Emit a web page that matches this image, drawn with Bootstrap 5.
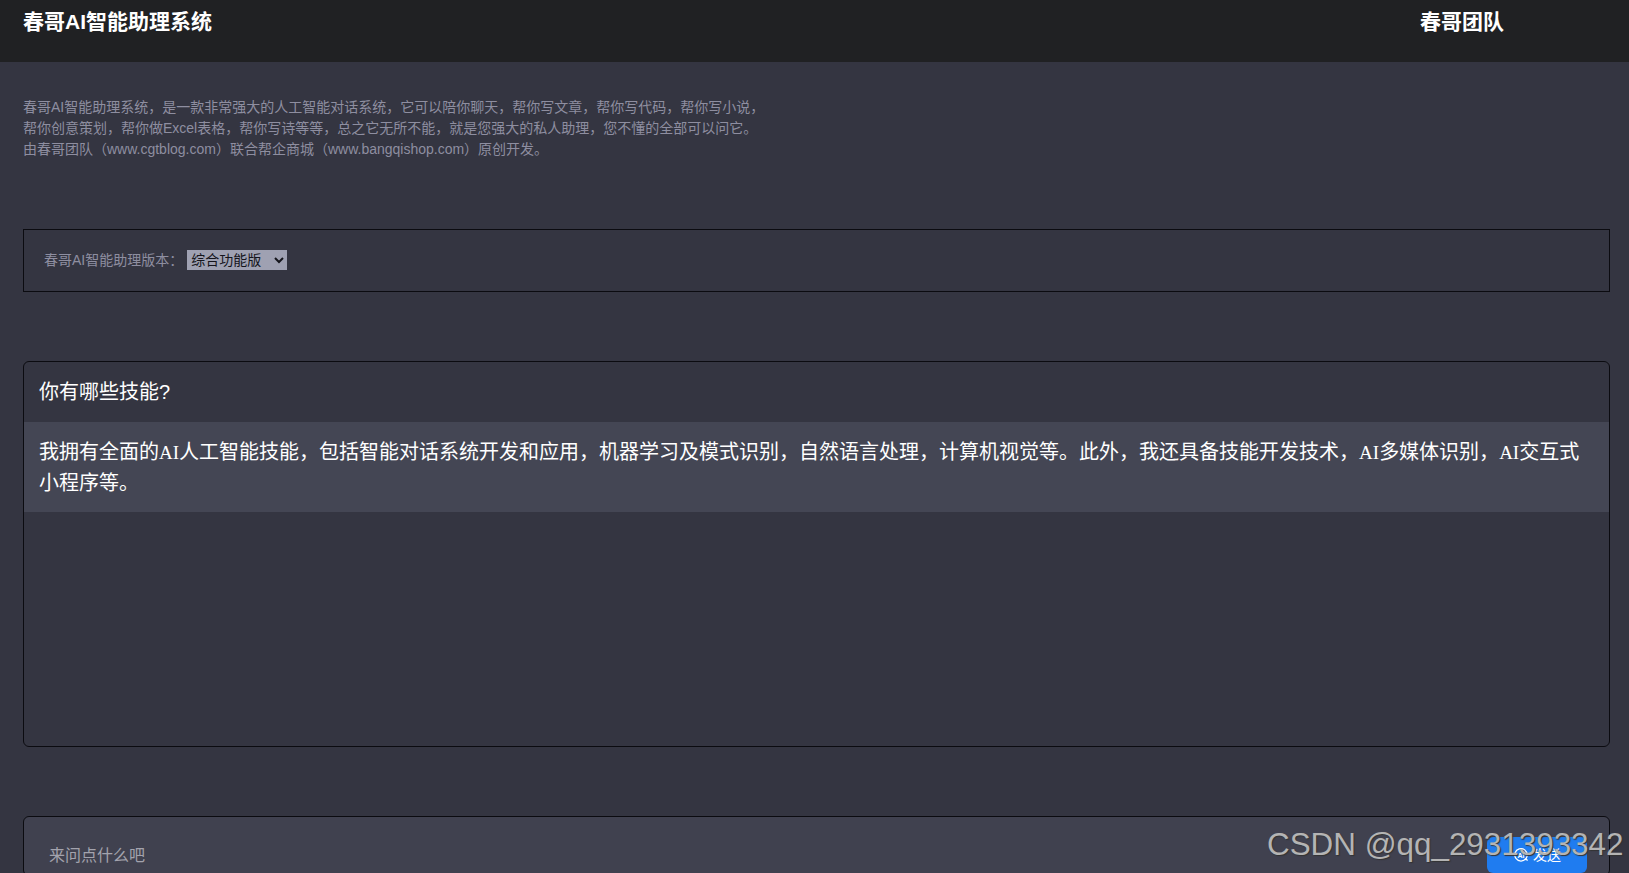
<!DOCTYPE html>
<html lang="zh">
<head>
<meta charset="utf-8">
<title>春哥AI智能助理系统</title>
<link href="https://cdn.jsdelivr.net/npm/bootstrap@5.3.0/dist/css/bootstrap.min.css" rel="stylesheet">
<style>
html,body{height:100%;overflow:hidden;}
body{background:#343541;font-family:"Liberation Sans","Noto Sans CJK SC",sans-serif;font-size:14px;color:#8e8ea0;}
.top-bar{height:62px;background:#202123;padding:9px 125px 0 23px;color:#fff;font-size:21px;font-weight:700;line-height:26px;}
.intro{margin:35px 23px 0;height:132px;line-height:21px;color:#8e8ea0;}
.version-box{margin:0 19px 0 23px;height:63px;border:1px solid #0b0b10;padding:0 20px 1px;}
.version-box select{width:100px;height:20px;background:#9fa1b2;color:#15151c;border:0;font:14px "Liberation Sans","Noto Sans CJK SC",sans-serif;margin-left:4px;padding:0;}
.chat-box{margin:69px 19px 0 23px;height:386px;border:1px solid #0b0b10;border-radius:6px;overflow:hidden;}
.ask-row{height:60px;padding:0 15px;color:#fff;font-size:20px;line-height:60px;}
.answer-row{background:#444654;padding:15px 15px 13px;color:#fff;font-size:20px;line-height:31px;font-family:"Liberation Serif","Noto Sans CJK SC",serif;}
.half-run{font-size:19px;}
.input-box{position:relative;margin:69px 19px 0 23px;height:60px;background:#40414f;border:1px solid #0b0b10;border-radius:6px;padding:27px 25px 0;color:#a3a3ad;font-size:16px;line-height:24px;}
.send-btn{position:absolute;left:1463px;top:20px;width:100px;height:36px;background:#1f7cf0;border:0;border-radius:6px;color:#fff;font-size:14px;padding:0;}
.watermark{position:absolute;left:1267px;top:826px;font:31.4px/38px "Liberation Sans",sans-serif;color:#b4b4b4;text-shadow:1px 1px 1px #333;white-space:nowrap;}
</style>
</head>
<body>
<header class="top-bar d-flex justify-content-between align-items-start">
  <div>春哥AI智能助理系统</div>
  <div>春哥团队</div>
</header>
<section class="intro">
  春哥AI智能助理系统，是一款非常强大的人工智能对话系统，它可以陪你聊天，帮你写文章，帮你写代码，帮你写小说，<br>
  帮你创意策划，帮你做Excel表格，帮你写诗等等，总之它无所不能，就是您强大的私人助理，您不懂的全部可以问它。<br>
  由春哥团队（www.cgtblog.com）联合帮企商城（www.bangqishop.com）原创开发。
</section>
<section class="version-box d-flex align-items-center">
  <label for="ver">春哥AI智能助理版本：</label>
  <select id="ver"><option>综合功能版</option></select>
</section>
<section class="chat-box">
  <div class="ask-row">你有哪些技能?</div>
  <div class="answer-row">我拥有全面的<span class="half-run">AI</span>人工智能技能，包括智能对话系统开发和应用，机器学习及模式识别，自然语言处理，计算机视觉等。此外，我还具备技能开发技术，<span class="half-run">AI</span>多媒体识别，<span class="half-run">AI</span>交互式小程序等。</div>
</section>
<section class="input-box">
  来问点什么吧
  <button class="btn send-btn d-inline-flex align-items-center justify-content-center gap-1" type="button">
    <svg width="16" height="16" viewBox="0 0 16 16" fill="none" stroke="#fff" stroke-width="1.3"><path d="M13 11.500A6.200 6.200 0 1 1 14.200 8c0 1.500-.4 2.800-1.200 3.500l1.500 2.200"/><text x="8" y="11" font-size="7" font-weight="700" fill="#fff" stroke="none" text-anchor="middle" font-family="Liberation Sans">AI</text></svg>
    <span>发送</span>
  </button>
</section>
<div class="watermark">CSDN @qq_2931393342</div>
</body>
</html>
